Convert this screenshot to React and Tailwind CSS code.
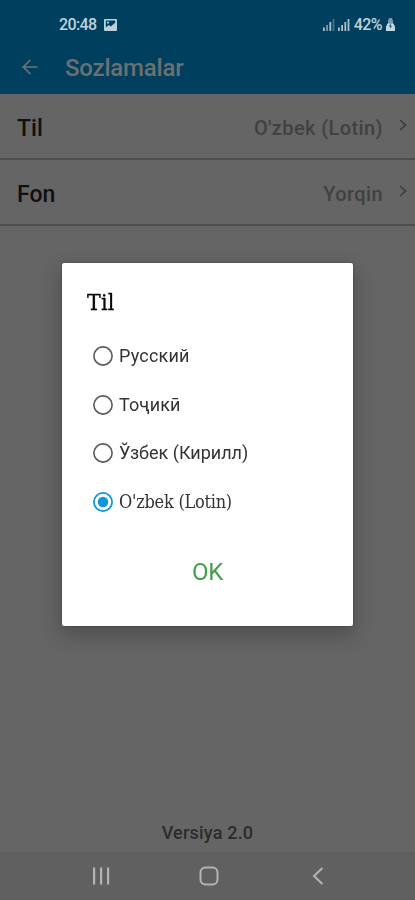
import React, { useState } from "react";

const settings = [
  { label: "Til", value: "O'zbek (Lotin)" },
  { label: "Fon", value: "Yorqin" },
];

const languages = [
  {
    id: "ru",
    name: "Русский",
    font: "font-['Roboto',sans-serif] text-[18px] tracking-[0.2px]",
  },
  {
    id: "tg",
    name: "Тоҷикӣ",
    font: "font-['Roboto',sans-serif] text-[18px] tracking-[0.1px]",
  },
  {
    id: "uz-cyrl",
    name: "Ўзбек (Кирилл)",
    font: "font-['Roboto',sans-serif] text-[18px]",
  },
  {
    id: "uz-latn",
    name: "O'zbek (Lotin)",
    font: "font-['DejaVu_Serif_Condensed','DejaVu_Serif',serif] text-[18px] tracking-[-0.25px]",
  },
];

const PictureIcon = () => (
  <svg width="13" height="12" viewBox="0 0 13 12">
    <path
      fill="#b9d0dd"
      fillRule="evenodd"
      d="M1 0h11a1 1 0 0 1 1 1v10a1 1 0 0 1-1 1H1a1 1 0 0 1-1-1V1a1 1 0 0 1 1-1Zm.8 1.5v7l3-2.5 2 1.5 4.4-3.7V1.5Z"
    />
    <circle cx="4" cy="3.6" r="1.1" fill="#b9d0dd" />
  </svg>
);

const SignalIcon = ({ faded }) => (
  <svg width="12" height="13" viewBox="0 0 12 13" fill="#a9c0cd">
    <rect x="0" y="9.5" width="1.8" height="3.5" />
    <rect x="3.2" y="7" width="1.8" height="6" opacity={faded ? 0.7 : 1} />
    <rect x="6.4" y="4" width="1.8" height="9" />
    <rect x="9.6" y="1" width="1.8" height="12" opacity={faded ? 0.4 : 1} />
  </svg>
);

const BatteryIcon = () => (
  <svg width="9" height="13" viewBox="0 0 9 13">
    <path d="M3 0h3v1.5h1V6H2V1.5h1Z" fill="#7897a8" />
    <path d="M1.6 5.5h5.8L9 8.5V13H0V8.5Z" fill="#c3d8e3" />
    <path d="M4.5 5 3 8.5h1.2V11L6 7.8H4.8Z" fill="#24566f" />
  </svg>
);

const BackArrow = () => (
  <svg
    width="16"
    height="16"
    viewBox="0 0 16 16"
    fill="none"
    stroke="#6d7479"
    strokeWidth="1.7"
  >
    <path d="M15.5 8H1.5M8.3 1 1.3 8l7 7" />
  </svg>
);

const Chevron = () => (
  <svg
    width="8"
    height="12"
    viewBox="0 0 8 12"
    fill="none"
    stroke="#3b3b3b"
    strokeWidth="1.6"
  >
    <path d="M1 1l5.5 5L1 11" />
  </svg>
);

const Radio = ({ checked }) => (
  <svg width="20" height="20" viewBox="0 0 20 20" fill="none">
    <circle
      cx="10"
      cy="10"
      r="9.1"
      stroke={checked ? "#1296db" : "#5a5a5a"}
      strokeWidth={checked ? 1.8 : 1.6}
    />
    {checked && <circle cx="10" cy="10" r="5.3" fill="#1296db" />}
  </svg>
);

const App = () => {
  const [selected, setSelected] = useState("uz-latn");
  const [open, setOpen] = useState(true);

  return (
    <div className="w-full h-screen flex flex-col bg-[#656565] font-['Roboto',sans-serif] overflow-hidden">
      {/* Status bar and header */}
      <div className="h-[94px] shrink-0 bg-[#00405e]">
        <div className="h-[49px] pl-[59px] pr-[20px] flex items-center text-[#bdd3df]">
          <span className="text-[16px] leading-none font-medium tracking-[-0.6px]">
            20:48
          </span>
          <span className="ml-[7px]">
            <PictureIcon />
          </span>
          <span className="ml-auto flex items-center gap-[3px]">
            <SignalIcon faded />
            <SignalIcon />
          </span>
          <span className="ml-[4px] mr-[4px] text-[16px] leading-none font-medium tracking-[-0.6px]">
            42%
          </span>
          <BatteryIcon />
        </div>
        <div className="h-[36px] pl-[22px] flex items-center">
          <BackArrow />
          <h1 className="ml-[27px] pt-[2px] text-[24px] leading-none font-medium tracking-[-0.2px] text-[#6b7073]">
            Sozlamalar
          </h1>
        </div>
      </div>

      {settings.map((item) => (
        <div
          key={item.label}
          className="h-[66px] shrink-0 flex items-center pl-[17px] pr-[8px] pt-[4px] border-b-2 border-[#4e4e4e] cursor-pointer"
          onClick={() => setOpen(true)}
        >
          <span className="pt-[1px] text-[23px] leading-none font-medium text-[#101010]">
            {item.label}
          </span>
          <span className="ml-auto text-[20px] leading-none font-medium text-[#414141] tracking-[0.4px]">
            {item.value}
          </span>
          <span className="ml-[16px] mb-[7px]">
            <Chevron />
          </span>
        </div>
      ))}

      <div className="mt-auto mb-[10px] text-center text-[18px] leading-none font-medium text-[#2c2c2c] tracking-[0.2px]">
        Versiya 2.0
      </div>

      {/* Navigation bar */}
      <div className="h-[48px] shrink-0 bg-[#606060] flex items-center pl-[92px]">
        <svg width="18" height="18" viewBox="0 0 18 18" fill="#b4b4b4">
          <rect x="1" y="0.5" width="2.2" height="17" />
          <rect x="8" y="0.5" width="2.2" height="17" />
          <rect x="15" y="0.5" width="2.2" height="17" />
        </svg>
        <svg
          className="ml-[89px]"
          width="20"
          height="20"
          viewBox="0 0 20 20"
          fill="none"
        >
          <rect
            x="1.5"
            y="1.5"
            width="17"
            height="17"
            rx="5"
            stroke="#b4b4b4"
            strokeWidth="2"
          />
        </svg>
        <svg
          className="ml-[93px]"
          width="12"
          height="18"
          viewBox="0 0 12 18"
          fill="none"
          stroke="#b4b4b4"
          strokeWidth="2"
        >
          <path d="M10.5 1 2 9l8.5 8" />
        </svg>
      </div>

      {/* Language dialog */}
      {open && (
        <div className="fixed inset-0 flex items-center justify-center pb-[11px]">
          <div className="w-[291px] h-[363px] bg-white rounded-[2px] flex flex-col shadow-[0_8px_20px_2px_rgba(0,0,0,0.22),0_0_2px_rgba(0,0,0,0.4)]">
            <h2 className="mt-[26px] ml-[25px] h-[26px] text-[23px] leading-[26px] text-[#080808] tracking-[0.2px] [-webkit-text-stroke:0.3px_#080808] font-['DejaVu_Serif_Condensed','DejaVu_Serif',serif]">
              Til
            </h2>
            <div className="mt-[17px] ml-[31px] flex flex-col">
              {languages.map((lang) => (
                <button
                  key={lang.id}
                  type="button"
                  className="h-[48.5px] flex items-center gap-[6px] text-[#333333] cursor-pointer"
                  onClick={() => setSelected(lang.id)}
                >
                  <Radio checked={selected === lang.id} />
                  <span className={`leading-none ${lang.font}`}>
                    {lang.name}
                  </span>
                </button>
              ))}
            </div>
            <button
              type="button"
              className="mt-[34px] self-center text-[24px] leading-none tracking-[-0.3px] text-[#43a047] cursor-pointer"
              onClick={() => setOpen(false)}
            >
              OK
            </button>
          </div>
        </div>
      )}
    </div>
  );
};

export default App;
